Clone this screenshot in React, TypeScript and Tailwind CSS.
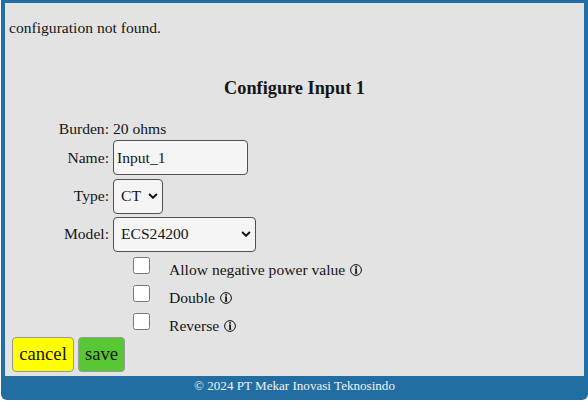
import type { ReactNode } from "react";

function Info() {
  return (
    <svg className="ml-[5px] h-[12px] w-[12px] shrink-0" viewBox="0 0 12 12" fill="none" stroke="#111">
      <circle cx="6" cy="6" r="5.4" strokeWidth="1" />
      <path d="M5 5h1.2M4.8 9.2h2.6" strokeWidth="0.8" />
      <path d="M6.1 4.6v4.8" strokeWidth="1.7" />
      <circle cx="6.1" cy="2.8" r="0.6" fill="#111" strokeWidth="0.8" />
    </svg>
  );
}

function Chevron() {
  return (
    <svg className="h-[6px] w-[10px] shrink-0" viewBox="0 0 10 6" fill="none" stroke="#111" strokeWidth="1.9">
      <path d="M1.1 1l3.9 3.8L8.9 1" />
    </svg>
  );
}

function Row({ label, className, labelClass = "pb-[1px]", children }: { label: string; className: string; labelClass?: string; children: ReactNode }) {
  return (
    <div className={`flex items-center ${className}`}>
      <div className={`mr-[4px] w-[104px] shrink-0 text-right ${labelClass}`}>{label}</div>
      {children}
    </div>
  );
}

function Check({ label }: { label: string }) {
  return (
    <label className="flex h-[28px] items-start pl-[128px]">
      <span className="h-[17px] w-[17px] rounded-[2.5px] border border-[#777] bg-white" />
      <span className="ml-[19px] flex h-[26px] items-center">
        {label}
        <Info />
      </span>
    </label>
  );
}

const field = "flex h-[35px] items-center rounded-[4px] border border-[#505050] bg-[#f5f5f5]";

export default function App() {
  return (
    <div className="h-[412px] w-[588px] overflow-hidden bg-white pl-px font-['Liberation_Serif',serif] text-[15.6px] leading-[18px] whitespace-nowrap text-[#151515]">
      <div className="flex h-[400px] flex-col rounded-b-[6px] bg-[#226ea2] pt-[3px] pr-[4px] pl-[4px]">
        <main className="h-[373px] bg-[#e3e3e3]">
          <p className="pt-[16px] pl-[4px]">configuration not found.</p>
          <h1 className="mt-[41px] text-center text-[18.3px] leading-[20px] font-bold">Configure Input 1</h1>
          <div className="pt-[21px]">
            <Row label="Burden:" className="h-[20px]"><span className="pb-[1px]">20 ohms</span></Row>
            <Row label="Name:" className="h-[37px]" labelClass="pb-0">
              <div className={`${field} w-[135px] pl-[3px]`}>Input_1</div>
            </Row>
            <Row label="Type:" className="h-[41px]">
              <div className={`${field} w-[50px] justify-between pr-[4px] pb-[1px] pl-[7px]`}>CT<Chevron /></div>
            </Row>
            <Row label="Model:" className="h-[35px]">
              <div className={`${field} w-[143px] justify-between pr-[4px] pb-[1px] pl-[7px]`}>ECS24200<Chevron /></div>
            </Row>
          </div>
          <div className="pt-[5px]">
            <Check label="Allow negative power value" />
            <Check label="Double" />
            <Check label="Reverse" />
          </div>
          <div className="-mt-[4px] flex gap-[4px] pl-[7px] text-[18.7px]">
            <button className="h-[35px] w-[62px] rounded-[4px] border border-[#999] bg-[#ffff00] pb-[2px]">cancel</button>
            <button className="h-[35px] w-[47px] rounded-[4px] border border-[#999] bg-[#57c734] pb-[2px]">save</button>
          </div>
        </main>
        <footer className="pt-[1px] text-center text-[13.1px] text-[#f1f1f1]">© 2024 PT Mekar Inovasi Teknosindo</footer>
      </div>
    </div>
  );
}
